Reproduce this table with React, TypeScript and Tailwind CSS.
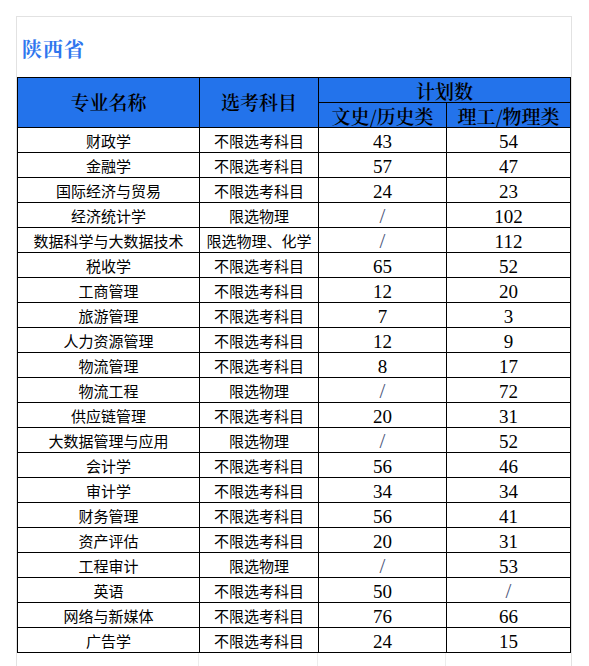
import React from "react";

type Row = [string, string, string, string];

const rows: Row[] = [
  ["财政学", "不限选考科目", "43", "54"],
  ["金融学", "不限选考科目", "57", "47"],
  ["国际经济与贸易", "不限选考科目", "24", "23"],
  ["经济统计学", "限选物理", "/", "102"],
  ["数据科学与大数据技术", "限选物理、化学", "/", "112"],
  ["税收学", "不限选考科目", "65", "52"],
  ["工商管理", "不限选考科目", "12", "20"],
  ["旅游管理", "不限选考科目", "7", "3"],
  ["人力资源管理", "不限选考科目", "12", "9"],
  ["物流管理", "不限选考科目", "8", "17"],
  ["物流工程", "限选物理", "/", "72"],
  ["供应链管理", "不限选考科目", "20", "31"],
  ["大数据管理与应用", "限选物理", "/", "52"],
  ["会计学", "不限选考科目", "56", "46"],
  ["审计学", "不限选考科目", "34", "34"],
  ["财务管理", "不限选考科目", "56", "41"],
  ["资产评估", "不限选考科目", "20", "31"],
  ["工程审计", "限选物理", "/", "53"],
  ["英语", "不限选考科目", "50", "/"],
  ["网络与新媒体", "不限选考科目", "76", "66"],
  ["广告学", "不限选考科目", "24", "15"],
];

const cjk = "font-['Noto_Serif_CJK_SC','Noto_Sans_CJK_SC',sans-serif]";
const sans = "font-['Noto_Sans_CJK_SC',sans-serif]";

function Num({ v }: { v: string }) {
  if (v === "/") {
    return (
      <span className="font-['Liberation_Serif',serif] text-[21px] leading-none text-[#4a5478] pt-[2px]">
        /
      </span>
    );
  }
  return (
    <span className="font-['Liberation_Serif',serif] text-[19px] leading-none text-black pt-[3px]">
      {v}
    </span>
  );
}

export default function App() {
  return (
    <div className="w-[589px] h-[666px] bg-white overflow-hidden">
      <div className="ml-[16px] mt-[16px] w-[556px] border-t border-l border-r border-[#e2e2e2]">
        <div className="h-[60px] flex items-center pl-[5px] pt-[3px]">
          <span className={`${cjk} text-[20px] font-bold text-[#2f76ee] leading-none tracking-[1px]`}>
            陕西省
          </span>
        </div>
        <div className="grid grid-cols-[182px_119px_128px_124px] border-t border-l border-black">
          <div
            className={`row-span-2 bg-[#2373eb] border-r border-b border-black flex items-center justify-center ${cjk} text-[19px] font-semibold text-black`}
          >
            专业名称
          </div>
          <div
            className={`row-span-2 bg-[#2373eb] border-r border-b border-black flex items-center justify-center ${cjk} text-[19px] font-semibold text-black`}
          >
            选考科目
          </div>
          <div
            className={`col-span-2 h-[25px] bg-[#2373eb] border-r border-b border-black flex items-center justify-center ${cjk} text-[19px] font-semibold text-black leading-none`}
          >
            计划数
          </div>
          <div
            className={`h-[25px] bg-[#2373eb] border-r border-b border-black flex items-center justify-center ${cjk} text-[19px] font-semibold text-black leading-none`}
          >
            文史/历史类
          </div>
          <div
            className={`h-[25px] bg-[#2373eb] border-r border-b border-black flex items-center justify-center ${cjk} text-[19px] font-semibold text-black leading-none`}
          >
            理工/物理类
          </div>
          {rows.map((r, i) => (
            <React.Fragment key={i}>
              <div
                className={`h-[25px] border-r border-b border-black flex items-center justify-center ${sans} text-[15px] text-black leading-none`}
              >
                {r[0]}
              </div>
              <div
                className={`h-[25px] border-r border-b border-black flex items-center justify-center ${sans} text-[15px] text-black leading-none`}
              >
                {r[1]}
              </div>
              <div className="h-[25px] border-r border-b border-black flex items-center justify-center">
                <Num v={r[2]} />
              </div>
              <div className="h-[25px] border-r border-b border-black flex items-center justify-center">
                <Num v={r[3]} />
              </div>
            </React.Fragment>
          ))}
        </div>
        <div className="grid grid-cols-[182px_119px_128px_124px] h-[14px]">
          <div className="border-r border-[#ececec]" />
          <div className="border-r border-[#ececec]" />
          <div className="border-r border-[#ececec]" />
          <div />
        </div>
      </div>
    </div>
  );
}
